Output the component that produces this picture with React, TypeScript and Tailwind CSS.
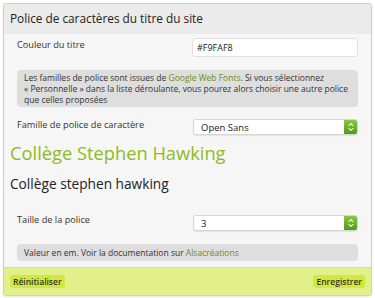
import { ChevronsUpDown } from 'lucide-react';

function SelectBox({ value }: { value: string }) {
  return (
    <div className="flex h-[16px] w-[165px] items-stretch overflow-hidden rounded-[3px] border border-[#d6d6d6] bg-white shadow-[0_1px_1px_rgba(0,0,0,0.08)]">
      <span className="flex-1 pl-[7px] text-[9.5px] leading-[15px] text-[#222]">{value}</span>
      <span className="flex w-[13px] items-center justify-center bg-gradient-to-b from-[#8cc63f] to-[#4e9a1c] text-white">
        <ChevronsUpDown className="h-[10px] w-[10px]" strokeWidth={2.5} />
      </span>
    </div>
  );
}

export default function App() {
  return (
    <div className="h-[298px] w-[375px] bg-white p-[3px] font-['Open_Sans',sans-serif]">
      <div className="flex h-[293px] flex-col overflow-hidden rounded-[3px] border border-[#c9dc93] bg-[#f6f6f6] shadow-[0_1px_2px_rgba(0,0,0,0.1)]">
        {/* Header */}
        <div className="flex h-[30px] items-center bg-[#ebebeb] px-[6px] text-[11.8px] text-[#222]">
          Police de caractères du titre du site
        </div>

        {/* Body */}
        <div className="flex flex-1 flex-col px-[13px]">
          <div className="mt-[4px] flex items-start justify-between">
            <span className="text-[9.2px] text-[#333]">Couleur du titre</span>
            <div className="h-[19px] w-[166px] rounded-[3px] border border-[#e0e0e0] bg-white pl-[4px] text-[9px] leading-[17px] text-[#222]">
              #F9FAF8
            </div>
          </div>

          <div className="mt-[13px] rounded-[4px] bg-[#dedede] px-[7px] py-[2px] text-[8.5px] leading-[11px] text-[#333]">
            Les familles de police sont issues de{' '}
            <span className="text-[#6a8f12]">Google Web Fonts</span>. Si vous sélectionnez
            <br />
            « Personnelle » dans la liste déroulante, vous pourez alors choisir une autre police
            <br />
            que celles proposées
          </div>

          <div className="mt-[12px] flex items-start justify-between">
            <span className="mt-[-1px] text-[9.2px] text-[#333]">Famille de police de caractère</span>
            <SelectBox value="Open Sans" />
          </div>

          <div className="-mx-[7px] mt-[4px] text-[18.3px] leading-[28px] text-[#8dbb1f]">
            Collège Stephen Hawking
          </div>

          <div className="-mx-[7px] mt-[7px] text-[13.7px] leading-[20px] text-[#222]">
            Collège stephen hawking
          </div>

          <div className="mt-[21px] flex items-start justify-between">
            <span className="mt-[-2px] text-[9.2px] text-[#333]">Taille de la police</span>
            <SelectBox value="3" />
          </div>

          <div className="mt-[13px] rounded-[4px] bg-[#dedede] px-[7px] py-[3px] text-[8.5px] leading-[11px] text-[#333]">
            Valeur en em. Voir la documentation sur{' '}
            <span className="text-[#6a8f12]">Alsacréations</span>
          </div>
        </div>

        {/* Footer */}
        <div className="flex h-[28px] items-center justify-between border-t border-[#d2e37a] bg-[#e2f08b] px-[6px]">
          <button className="rounded-[3px] bg-[#d3e83c] px-[3px] text-[8.5px] leading-[13px] font-semibold text-[#333]">
            Réinitialiser
          </button>
          <button className="rounded-[3px] bg-[#d3e83c] px-[3px] text-[8.5px] leading-[13px] font-semibold text-[#333]">
            Enregistrer
          </button>
        </div>
      </div>
    </div>
  );
}
